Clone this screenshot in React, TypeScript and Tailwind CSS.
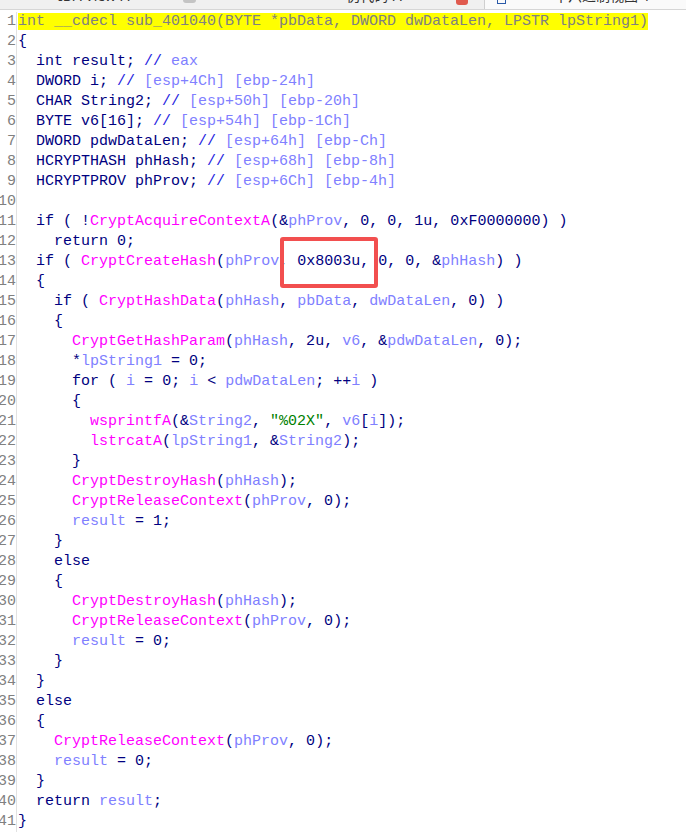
const code = [
  "int __cdecl sub_401040(BYTE *pbData, DWORD dwDataLen, LPSTR lpString1)",
  "{",
  "  int result; // eax",
  "  DWORD i; // [esp+4Ch] [ebp-24h]",
  "  CHAR String2; // [esp+50h] [ebp-20h]",
  "  BYTE v6[16]; // [esp+54h] [ebp-1Ch]",
  "  DWORD pdwDataLen; // [esp+64h] [ebp-Ch]",
  "  HCRYPTHASH phHash; // [esp+68h] [ebp-8h]",
  "  HCRYPTPROV phProv; // [esp+6Ch] [ebp-4h]",
  "",
  "  if ( !CryptAcquireContextA(&phProv, 0, 0, 1u, 0xF0000000) )",
  "    return 0;",
  "  if ( CryptCreateHash(phProv, 0x8003u, 0, 0, &phHash) )",
  "  {",
  "    if ( CryptHashData(phHash, pbData, dwDataLen, 0) )",
  "    {",
  "      CryptGetHashParam(phHash, 2u, v6, &pdwDataLen, 0);",
  "      *lpString1 = 0;",
  "      for ( i = 0; i < pdwDataLen; ++i )",
  "      {",
  '        wsprintfA(&String2, "%02X", v6[i]);',
  "        lstrcatA(lpString1, &String2);",
  "      }",
  "      CryptDestroyHash(phHash);",
  "      CryptReleaseContext(phProv, 0);",
  "      result = 1;",
  "    }",
  "    else",
  "    {",
  "      CryptDestroyHash(phHash);",
  "      CryptReleaseContext(phProv, 0);",
  "      result = 0;",
  "    }",
  "  }",
  "  else",
  "  {",
  "    CryptReleaseContext(phProv, 0);",
  "    result = 0;",
  "  }",
  "  return result;",
  "}",
];

const funcs = new Set([
  "CryptAcquireContextA",
  "CryptCreateHash",
  "CryptHashData",
  "CryptGetHashParam",
  "CryptDestroyHash",
  "CryptReleaseContext",
  "wsprintfA",
  "lstrcatA",
]);

const vars = new Set(["result", "i", "String2", "v6", "pdwDataLen", "phHash", "phProv", "pbData", "dwDataLen", "lpString1"]);

function tokenize(line: string) {
  const out: { t: string; c: string }[] = [];
  const re = /("[^"]*")|([A-Za-z_][A-Za-z0-9_]*)|(\s+)|(.)/g;
  let m: RegExpExecArray | null;
  while ((m = re.exec(line))) {
    if (m[1]) out.push({ t: m[1], c: "text-[#008000]" });
    else if (m[2]) {
      const w = m[2];
      if (funcs.has(w)) out.push({ t: w, c: "text-[#ff00ff]" });
      else if (vars.has(w)) out.push({ t: w, c: "text-[#8080ff]" });
      else out.push({ t: w, c: "text-[#000080]" });
    } else out.push({ t: m[0], c: "text-[#000080]" });
  }
  return out;
}

function CodeLine({ line, n }: { line: string; n: number }) {
  if (n === 1) {
    return <span className="bg-[#ffff00] text-[#808080]">{line}</span>;
  }
  // declarations: comment part coloured separately
  const ci = line.indexOf("//");
  if (ci >= 0) {
    const rest = line.slice(ci + 2);
    return (
      <>
        <span className="text-[#000080]">{line.slice(0, ci)}</span>
        <span className="text-[#1f1fe0]">//</span>
        <span className="text-[#8080ff]">{rest}</span>
      </>
    );
  }
  return (
    <>
      {tokenize(line).map((tk, k) => (
        <span key={k} className={tk.c}>
          {tk.t}
        </span>
      ))}
    </>
  );
}

export default function App() {
  return (
    <div className="relative w-[686px] h-[836px] overflow-hidden bg-white font-['Liberation_Mono',monospace] text-[15px]">
      {/* tab strip, cut off at the top */}
      <div className="flex h-[10px] overflow-hidden border-b border-[#d6d6d6] bg-[#f0f0f0] font-['Noto_Sans','Noto_Sans_CJK_SC',sans-serif] text-[14px] text-[#333]">
        <div className="flex w-[484px] items-start">
          <span className="ml-[58px] -mt-[13px] whitespace-nowrap leading-[18px]">IDA View-A</span>
          <span className="ml-[54px] h-[3px] w-[13px] rounded-b-[3px] bg-[#c4c4c4]" />
          <span className="ml-[150px] -mt-[13px] whitespace-nowrap leading-[18px]">伪代码-A</span>
          <span className="ml-[54px] h-[5px] w-[12px] rounded-b-[3px] bg-[#e05a4e]" />
        </div>
        <div className="flex flex-1 items-start border-l border-[#cfcfcf] bg-[#fafafa]">
          <span className="ml-[12px] h-[4px] w-[9px] border-x border-b border-[#2a5aa8]" />
          <span className="ml-[48px] -mt-[13px] whitespace-nowrap leading-[18px]">十六进制视图-1</span>
        </div>
      </div>

      <div className="flex pt-[2px]">
        <div className="w-[17px] shrink-0 border-r border-[#e2e2e2] text-[#808080]">
          {code.map((_, i) => (
            <div key={i} className="flex h-[20px] items-center justify-end whitespace-nowrap">
              {i + 1}
            </div>
          ))}
        </div>
        <div className="pl-[1px]">
          {code.map((line, i) => (
            <div key={i} className="flex h-[20px] items-center whitespace-pre">
              <div>
                <CodeLine line={line} n={i + 1} />
              </div>
            </div>
          ))}
        </div>
      </div>

      {/* red annotation box */}
      <div className="absolute left-[280px] top-[237px] h-[51px] w-[98px] rounded-[3px] border-[4px] border-[#f24f4f]" />
    </div>
  );
}
